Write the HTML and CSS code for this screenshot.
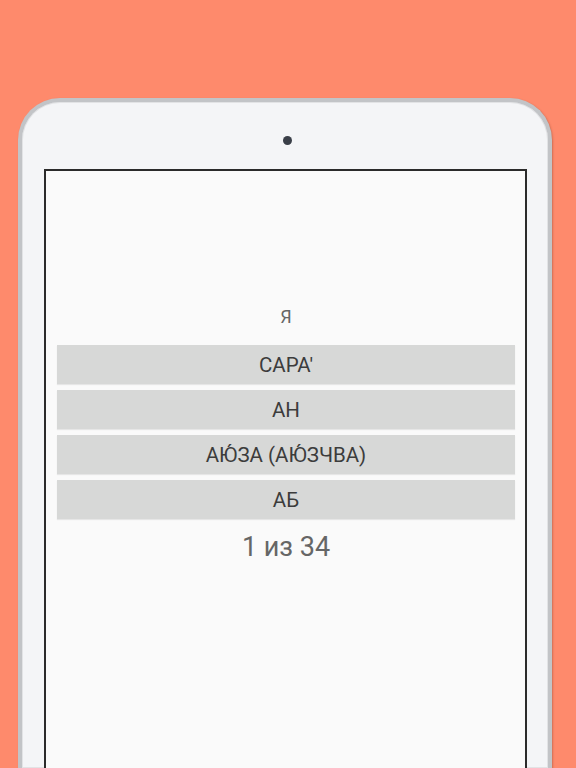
FILE: index.html
```html
<!DOCTYPE html>
<html lang="ru">
<head>
<meta charset="utf-8">
<title>Quiz</title>
<link rel="stylesheet" href="styles.css">
</head>
<body>
<div class="device">
  <div class="bezel-top">
    <span class="camera"></span>
  </div>
  <div class="screen">
    <div class="question">Я</div>
    <div class="answers">
      <div class="answer">САРА'</div>
      <div class="answer">АН</div>
      <div class="answer">АЮ́ЗА (АЮ́ЗЧВА)</div>
      <div class="answer">АБ</div>
    </div>
    <div class="counter">1 из 34</div>
  </div>
</div>
</body>
</html>
```
FILE: styles.css
```css
html, body {
  margin: 0;
  padding: 0;
}
body {
  background: #fe8a6c;
  width: 576px;
  height: 768px;
  overflow: hidden;
  font-family: Roboto, "Noto Sans", "DejaVu Sans", sans-serif;
}
.device {
  box-sizing: border-box;
  margin: 98px 0 0 18px;
  width: 534px;
  height: 670px;
  background: #f4f5f7;
  border: 4px solid #c2c4c7;
  border-bottom: none;
  border-radius: 42px 42px 0 0;
  box-shadow: inset 0 0 0 1px #e2e3e5, 1px 1px 2px rgba(120, 60, 40, 0.35);
  display: flex;
  flex-direction: column;
  padding: 0 21px 0 22px;
}
.bezel-top {
  height: 67px;
  display: flex;
  justify-content: center;
  align-items: center;
  padding-left: 3px;
}
.camera {
  width: 9px;
  height: 9px;
  border-radius: 50%;
  background: #3a3f48;
  margin-top: 9px;
}
.screen {
  flex: 1;
  background: #fafafa;
  border: 2px solid #2b2b2b;
  border-bottom: none;
  padding: 136px 10px 0 11px;
  display: flex;
  flex-direction: column;
  align-items: stretch;
}
.question {
  font-size: 18px;
  line-height: 20px;
  color: #666;
  text-align: center;
}
.answers {
  margin-top: 18px;
  display: flex;
  flex-direction: column;
  gap: 6px;
}
.answer {
  height: 39px;
  background: #d7d8d7;
  box-shadow: 0 1px 1px rgba(0, 0, 0, 0.08);
  display: flex;
  align-items: center;
  justify-content: center;
  font-size: 20.5px;
  color: #3c3c3c;
}
.counter {
  margin-top: 12px;
  font-size: 27px;
  line-height: 32px;
  color: #666;
  text-align: center;
}
```
